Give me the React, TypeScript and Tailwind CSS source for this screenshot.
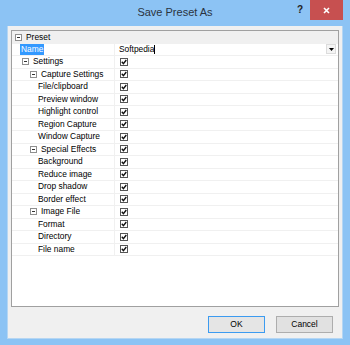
type Row = {
  label: string;
  kind: "cat" | "name" | "group1" | "group2" | "leaf";
};

const rows: Row[] = [
  { label: "Preset", kind: "cat" },
  { label: "Name", kind: "name" },
  { label: "Settings", kind: "group1" },
  { label: "Capture Settings", kind: "group2" },
  { label: "File/clipboard", kind: "leaf" },
  { label: "Preview window", kind: "leaf" },
  { label: "Highlight control", kind: "leaf" },
  { label: "Region Capture", kind: "leaf" },
  { label: "Window Capture", kind: "leaf" },
  { label: "Special Effects", kind: "group2" },
  { label: "Background", kind: "leaf" },
  { label: "Reduce image", kind: "leaf" },
  { label: "Drop shadow", kind: "leaf" },
  { label: "Border effect", kind: "leaf" },
  { label: "Image File", kind: "group2" },
  { label: "Format", kind: "leaf" },
  { label: "Directory", kind: "leaf" },
  { label: "File name", kind: "leaf" },
];

function Collapse() {
  return (
    <svg width="7" height="7" viewBox="0 0 7 7" className="shrink-0">
      <rect x="0.5" y="0.5" width="6" height="6" fill="#fff" stroke="#8f8f8f" />
      <line x1="2" y1="3.5" x2="5" y2="3.5" stroke="#333" />
    </svg>
  );
}

function Check() {
  return (
    <svg width="8" height="8" viewBox="0 0 8 8">
      <rect x="0.5" y="0.5" width="7" height="7" fill="#fff" stroke="#555" />
      <path d="M1.8 3.8 L3.4 5.6 L6.3 2" fill="none" stroke="#111" strokeWidth="1.4" />
    </svg>
  );
}

function NameCell({ row }: { row: Row }) {
  if (row.kind === "name") {
    return (
      <div className="pl-[8px] flex items-center">
        <span className="bg-[#3399ff] text-white px-[1px] leading-[11px]">{row.label}</span>
      </div>
    );
  }
  if (row.kind === "leaf") {
    return <div className="pl-[26px]">{row.label}</div>;
  }
  const pad = row.kind === "group1" ? "pl-[10px]" : "pl-[18px]";
  return (
    <div className={`${pad} flex items-center gap-[4px]`}>
      <Collapse />
      <span>{row.label}</span>
    </div>
  );
}

export default function App() {
  return (
    <div className="w-[350px] h-[345px] bg-[#8cc3f4] flex flex-col font-['Liberation_Sans',Arial,sans-serif] text-black">
      {/* title bar */}
      <div className="h-[26px] relative flex justify-center shrink-0">
        <span className="text-[11px] text-[#2b3340] mt-[4px]">Save Preset As</span>
        <span className="absolute left-[297px] top-[2px] text-[10px] font-bold text-[#222]">?</span>
        <div className="absolute right-[7px] top-0 w-[33px] h-[20px] bg-[#c75050] flex items-center justify-center">
          <svg width="7" height="7" viewBox="0 0 7 7">
            <path d="M1 1 L6 6 M6 1 L1 6" stroke="#fff" strokeWidth="1.6" />
          </svg>
        </div>
      </div>

      {/* client */}
      <div className="mx-[7px] flex-1 mb-[6px] bg-[#f0f0f0] border-l border-r border-b border-[#b5d6f3] flex flex-col px-[3px] pt-[4px]">
        <div className="h-[277px] border border-[#a0a0a0] bg-white text-[8.4px] overflow-hidden">
          {rows.map((row, i) =>
            row.kind === "cat" ? (
              <div key={i} className="h-[12.5px] bg-[#f0f0f0] flex items-center pl-[3px] gap-[4px]">
                <Collapse />
                <span>{row.label}</span>
              </div>
            ) : (
              <div key={i} className="h-[12.5px] flex border-b border-[#f0f0f0]">
                <div className="w-[103px] border-r border-[#f0f0f0] flex items-center shrink-0">
                  <NameCell row={row} />
                </div>
                {row.kind === "name" ? (
                  <div className="flex-1 flex items-center pl-[4px]">
                    <span>Softpedia</span>
                    <span className="w-px h-[9px] bg-black" />
                    <div className="ml-auto mr-[2px] w-[10px] h-[10px] bg-[#f4f4f4] border border-[#dcdcdc] flex items-center justify-center">
                      <svg width="5" height="3" viewBox="0 0 5 3">
                        <path d="M0 0 L5 0 L2.5 3 Z" fill="#000" />
                      </svg>
                    </div>
                  </div>
                ) : (
                  <div className="flex-1 flex items-center pl-[5px]">
                    <Check />
                  </div>
                )}
              </div>
            )
          )}
        </div>

        <div className="flex justify-end gap-[11px] mt-[9px] pr-[6px] text-[8.5px]">
          <div className="w-[57px] h-[17px] border border-[#3c9bf0] bg-[#e5e5e5] flex items-center justify-center">
            OK
          </div>
          <div className="w-[57px] h-[17px] border border-[#adadad] bg-[#e1e1e1] flex items-center justify-center">
            Cancel
          </div>
        </div>
      </div>
    </div>
  );
}
